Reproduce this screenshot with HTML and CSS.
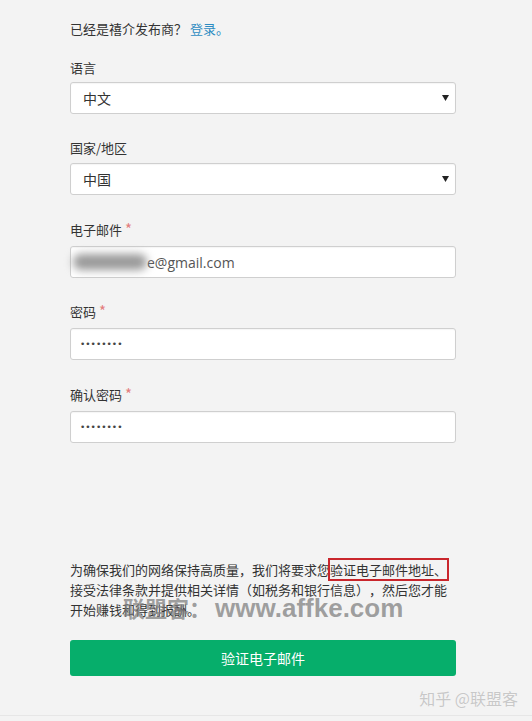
FILE: index.html
```html
<!DOCTYPE html>
<html lang="zh-CN">
<head>
<meta charset="utf-8">
<title>注册</title>
<link rel="stylesheet" href="styles.css">
</head>
<body>
<div class="page">
  <p class="intro">已经是禧介发布商？ <a href="#" class="link">登录。</a></p>

  <div class="field f1">
    <label class="label">语言</label>
    <div class="control">
      <select class="select"><option>中文</option></select>
      <svg class="caret" width="7" height="6" viewBox="0 0 7 6"><path d="M0 0H7L3.5 6Z" fill="#222"/></svg>
    </div>
  </div>

  <div class="field f2">
    <label class="label">国家/地区</label>
    <div class="control">
      <select class="select"><option>中国</option></select>
      <svg class="caret" width="7" height="6" viewBox="0 0 7 6"><path d="M0 0H7L3.5 6Z" fill="#222"/></svg>
    </div>
  </div>

  <div class="field f3">
    <label class="label">电子邮件 <span class="req">*</span></label>
    <div class="control email">
      <span class="blur"></span>
      <input class="input email-input" type="text" value="e@gmail.com">
    </div>
  </div>

  <div class="field f4">
    <label class="label">密码 <span class="req">*</span></label>
    <div class="control">
      <input class="input pw" type="password" value="12345678">
    </div>
  </div>

  <div class="field f5">
    <label class="label">确认密码 <span class="req">*</span></label>
    <div class="control">
      <input class="input pw" type="password" value="12345678">
    </div>
  </div>

  <div class="notice">
    <p class="notice-text">为确保我们的网络保持高质量，我们将要求您<span class="mark">验证电子邮件地址、</span>接受法律条款并提供相关详情（如税务和银行信息），然后您才能开始赚钱和得到报酬。</p>
    <div class="wm"><span class="wm-cn">联盟客：</span><span class="wm-en">www.affke.com</span></div>
  </div>

  <button class="btn">验证电子邮件</button>
</div>
<div class="footer">知乎 @联盟客</div>
<div class="rule"></div>
</body>
</html>
```

FILE: styles.css
```css
html, body {
  margin: 0;
  padding: 0;
  background: #f3f3f3;
}
body {
  font-family: "Noto Sans CJK SC", "Microsoft YaHei", sans-serif;
  font-size: 13px;
  color: #333;
  text-spacing-trim: space-all;
}
.page {
  width: 386px;
  padding: 19px 0 0 70px;
}
.intro {
  margin: 0;
  line-height: 20px;
}
.link {
  color: #2e8cc2;
  text-decoration: none;
}
.field {
  display: flex;
  flex-direction: column;
  gap: 6px;
}
.f1 { margin-top: 19px; gap: 4px; }
.f2 { margin-top: 24px; gap: 5px; }
.f3 { margin-top: 25px; }
.f4 { margin-top: 24px; }
.f5 { margin-top: 25px; }
.label {
  display: block;
  height: 20px;
  line-height: 20px;
  color: #333;
}
.req {
  color: #e47d7d;
  font-size: 15px;
  line-height: 10px;
}
.control {
  position: relative;
  height: 30px;
  background: #fff;
  border: 1px solid #cfcfcf;
  border-radius: 3px;
  box-shadow: inset 0 1px 1px rgba(0,0,0,0.04);
  display: flex;
  align-items: center;
}
.select {
  appearance: none;
  -webkit-appearance: none;
  border: 0;
  background: transparent;
  width: 100%;
  height: 100%;
  padding: 0 0 0 12px;
  font-family: "Noto Sans CJK SC", sans-serif;
  font-size: 14px;
  color: #333;
  outline: none;
}
.caret {
  position: absolute;
  right: 6px;
  top: 12px;
  pointer-events: none;
}
.input {
  border: 0;
  background: transparent;
  width: 100%;
  height: 100%;
  padding: 0 0 0 10px;
  outline: none;
  font-family: "Open Sans", sans-serif;
  font-size: 14px;
  color: #555;
}
.email-input {
  padding-left: 0;
}
.blur {
  flex: none;
  width: 74px;
  height: 16px;
  margin-left: 2px;
  background: #9a9a9a;
  border-radius: 8px;
  filter: blur(4px);
}
.pw {
  font-family: "DejaVu Sans", sans-serif;
  font-size: 9px;
  letter-spacing: 0;
  color: #444;
  padding-left: 9px;
}
.notice {
  position: relative;
  margin-top: 117px;
}
.notice-text {
  margin: 0;
  line-height: 20px;
  color: #333;
}
.mark {
  outline: 2px solid #c9262c;
  outline-offset: 0px;
}
.wm {
  position: absolute;
  left: 53px;
  top: 32px;
  color: rgba(125,125,125,0.72);
  font-weight: bold;
  white-space: nowrap;
  line-height: 30px;
}
.wm-cn {
  font-family: "Noto Sans CJK SC", sans-serif;
  font-size: 22px;
}
.wm-en {
  font-family: "Liberation Sans", Arial, sans-serif;
  font-size: 26px;
  margin-left: 4px;
}
.btn {
  display: block;
  width: 386px;
  height: 36px;
  margin-top: 20px;
  border: 0;
  border-radius: 3px;
  background: #06ae6b;
  color: #fff;
  font-family: "Noto Sans CJK SC", sans-serif;
  font-size: 14px;
  cursor: pointer;
}
.footer {
  margin-top: 12px;
  padding-right: 14px;
  text-align: right;
  line-height: 20px;
  font-size: 16px;
  color: #c8c8c8;
  text-shadow: 0 0 1px #fff;
}
.rule {
  margin-top: 7px;
  border-top: 1px solid #e6e6e6;
}
```
